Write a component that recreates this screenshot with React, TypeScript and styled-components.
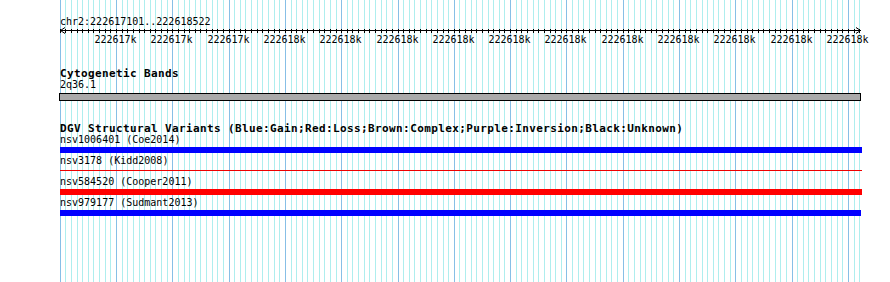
import React from "react";
import styled, { createGlobalStyle } from "styled-components";

const GlobalStyle = createGlobalStyle`
  html, body {
    margin: 0;
    padding: 0;
    background: #ffffff;
  }
  body {
    font-family: "DejaVu Sans Mono", "Liberation Mono", monospace;
    color: #000000;
  }
`;

// 222617100 sits at 59.7px, 10bp per minor grid step
const ORIGIN = 59.7;
const STEP = 5.63;
const LINE_COUNT = 143;
const TRACK_LEFT = 60;
const lineX = (i: number) => Math.round(ORIGIN + STEP * i);

const Page = styled.div`
  position: relative;
  width: 890px;
  height: 282px;
  overflow: hidden;
  background: #ffffff;
`;

const GridLayer = styled.svg`
  position: absolute;
  left: 0;
  top: 0;
  display: block;
`;

const Tracks = styled.div`
  position: relative;
  display: flex;
  flex-direction: column;
  width: 800px;
  padding: 15px 0 0 ${TRACK_LEFT}px;
`;

const RulerTitle = styled.div`
  font-size: 10px;
  line-height: 13px;
  white-space: nowrap;
`;

const Axis = styled.svg`
  display: block;
  overflow: visible;
`;

const TrackTitle = styled.div<{ $gap: number }>`
  margin-top: ${(p) => p.$gap}px;
  font-size: 11px;
  font-weight: bold;
  letter-spacing: 0.38px;
  line-height: 10px;
  white-space: nowrap;
`;

const FeatureLabel = styled.div<{ $gap?: number }>`
  margin-top: ${(p) => p.$gap ?? 0}px;
  font-size: 10px;
  line-height: 10px;
  white-space: nowrap;
`;

const Band = styled.div`
  box-sizing: border-box;
  margin: 3px 0 0 -1px;
  width: 802px;
  height: 8px;
  border: 1px solid #000000;
  background: #aaaaaa;
`;

const VariantList = styled.div`
  display: flex;
  flex-direction: column;
  margin-top: 1px;
`;

const VariantRow = styled.div`
  display: flex;
  flex-direction: column;
  height: 21px;
`;

const BarSlot = styled.div`
  display: flex;
  flex-direction: column;
  margin-top: 2px;
  height: 6px;
`;

const VariantBar = styled.div<{ $color: string; $thin?: boolean; $width: number }>`
  width: ${(p) => p.$width}px;
  height: ${(p) => (p.$thin ? 1 : 6)}px;
  margin-top: ${(p) => (p.$thin ? 2 : 0)}px;
  background: ${(p) => p.$color};
`;

const variants = [
  { id: "nsv1006401", study: "Coe2014", color: "#0000ff", thin: false, width: 802 },
  { id: "nsv3178", study: "Kidd2008", color: "#ee0000", thin: true, width: 802 },
  { id: "nsv584520", study: "Cooper2011", color: "#ff0000", thin: false, width: 802 },
  { id: "nsv979177", study: "Sudmant2013", color: "#0000ff", thin: false, width: 801 },
];

const Grid: React.FC = () => (
  <GridLayer width={890} height={282} shapeRendering="crispEdges">
    {Array.from({ length: LINE_COUNT }, (_, i) => (
      <rect
        key={i}
        x={lineX(i)}
        y={0}
        width={1}
        height={282}
        fill={i % 10 === 0 ? "#87bfe6" : "#aeeeee"}
      />
    ))}
  </GridLayer>
);

const Ruler: React.FC = () => {
  const labels = Array.from({ length: 14 }, (_, k) => k + 1);
  return (
    <Axis width={802} height={20}>
      <g shapeRendering="crispEdges" fill="#000000">
        <rect x={0} y={2} width={801} height={1} />
        {Array.from({ length: LINE_COUNT }, (_, i) => (
          <rect key={i} x={lineX(i) - TRACK_LEFT} y={1} width={1} height={4} />
        ))}
      </g>
      <polyline points="5,-0.5 0.5,2.5 5,5.5" fill="none" stroke="#000000" strokeWidth={1} />
      <polyline points="796,-0.5 800.5,2.5 796,5.5" fill="none" stroke="#000000" strokeWidth={1} />
      {labels.map((k) => (
        <text
          key={k}
          x={lineX(k * 10) - TRACK_LEFT - 0.5}
          y={15}
          textAnchor="middle"
          fontFamily='"DejaVu Sans Mono", "Liberation Mono", monospace'
          fontSize={10}
          fill="#000000"
        >
          {k <= 3 ? "222617k" : "222618k"}
        </text>
      ))}
    </Axis>
  );
};

export default function App() {
  return (
    <Page>
      <GlobalStyle />
      <Grid />
      <Tracks>
        <RulerTitle>chr2:222617101..222618522</RulerTitle>
        <Ruler />

        <TrackTitle $gap={21}>Cytogenetic Bands</TrackTitle>
        <FeatureLabel $gap={1}>2q36.1</FeatureLabel>
        <Band />

        <TrackTitle $gap={23}>
          DGV Structural Variants (Blue:Gain;Red:Loss;Brown:Complex;Purple:Inversion;Black:Unknown)
        </TrackTitle>
        <VariantList>
          {variants.map((v) => (
            <VariantRow key={v.id}>
              <FeatureLabel>
                {v.id} ({v.study})
              </FeatureLabel>
              <BarSlot>
                <VariantBar $color={v.color} $thin={v.thin} $width={v.width} />
              </BarSlot>
            </VariantRow>
          ))}
        </VariantList>
      </Tracks>
    </Page>
  );
}
